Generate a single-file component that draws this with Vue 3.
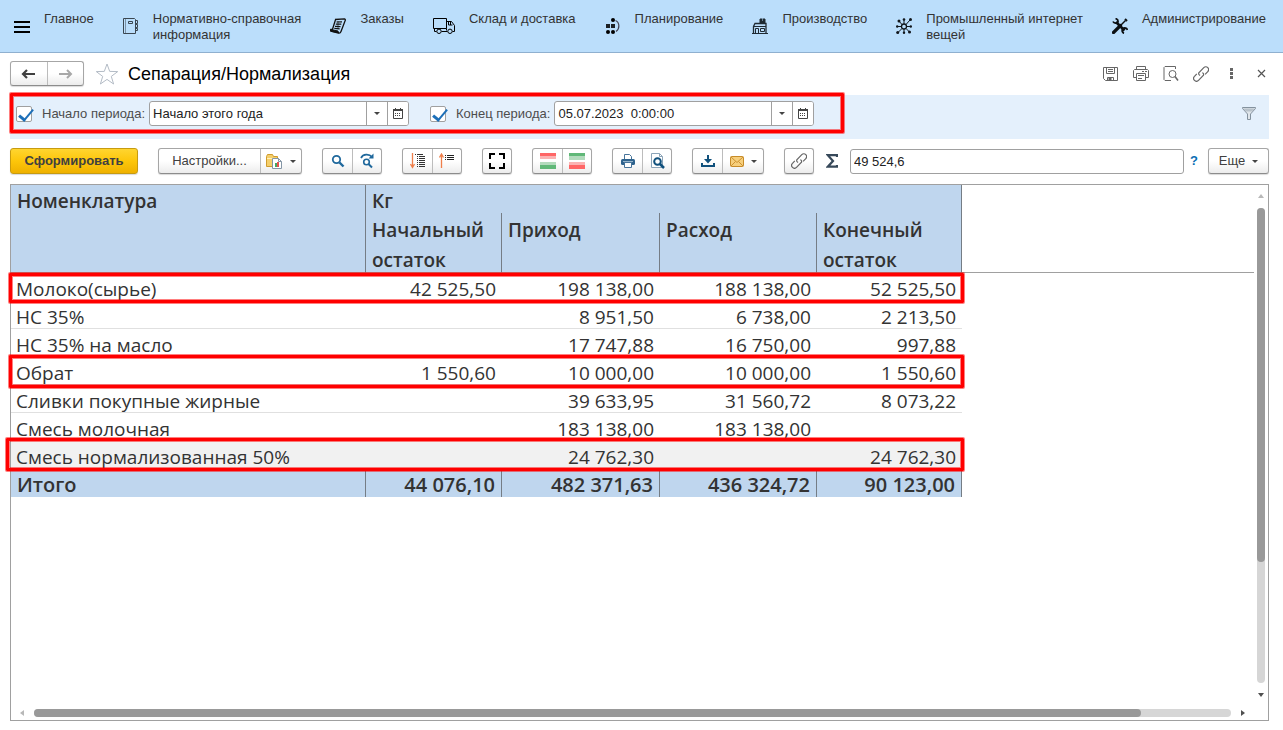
<script setup>
import { ref } from 'vue'

const startOn = ref(true)
const endOn = ref(true)
const startValue = ref('Начало этого года')
const endValue = ref('05.07.2023  0:00:00')
const sum = ref('49 524,6')

const sections = [
  { icon: 'menu', label: 'Главное' },
  { icon: 'book', label: 'Нормативно-справочная\nинформация' },
  { icon: 'orders', label: 'Заказы' },
  { icon: 'truck', label: 'Склад и доставка', wide: true },
  { icon: 'plan', label: 'Планирование' },
  { icon: 'factory', label: 'Производство' },
  { icon: 'iot', label: 'Промышленный интернет\nвещей' },
  { icon: 'tools', label: 'Администрирование' }
]

const rows = [
  { name: 'Молоко(сырье)', v: ['42 525,50', '198 138,00', '188 138,00', '52 525,50'], mark: 'mark-milk' },
  { name: 'НС 35%', v: ['', '8 951,50', '6 738,00', '2 213,50'] },
  { name: 'НС 35% на масло', v: ['', '17 747,88', '16 750,00', '997,88'] },
  { name: 'Обрат', v: ['1 550,60', '10 000,00', '10 000,00', '1 550,60'], mark: 'mark-skim' },
  { name: 'Сливки покупные жирные', v: ['', '39 633,95', '31 560,72', '8 073,22'] },
  { name: 'Смесь молочная', v: ['', '183 138,00', '183 138,00', ''] },
  { name: 'Смесь нормализованная 50%', v: ['', '24 762,30', '', '24 762,30'], mark: 'mark-mix', current: true }
]
const columns = ['Начальный остаток', 'Приход', 'Расход', 'Конечный остаток']
const totals = ['44 076,10', '482 371,63', '436 324,72', '90 123,00']
</script>

<template>
  <div class="app">
    <nav class="sections">
      <a v-for="s in sections" :key="s.label" href="#" class="section">
        <svg v-if="s.icon === 'menu'" class="sec-icon" viewBox="0 0 16 16"><path d="M0 4h16M0 9h16M0 14h16" stroke="#000" stroke-width="2" /></svg>
        <svg v-else-if="s.icon === 'book'" class="sec-icon" viewBox="0 0 16 16" fill="none" stroke="#3a4650">
          <path d="M.5.500h11l1 1v14H.5z" /><path d="M5.500 3.500h4v2h-4z" /><path d="M2.500 1v14" stroke-width=".5" /><path d="M13 2.500h1.500v3H13M13 6.500h1.500v3H13M13 10.500h1.500v2H13" />
        </svg>
        <svg v-else-if="s.icon === 'orders'" class="sec-icon" viewBox="0 0 16 16" fill="none" stroke="#111">
          <path d="M5 1.500 14.500.8c1 .3 1 1.400.5 2.200L11 13.500c-.5 1.300-1.500 1.800-2.500 1.500L1 13.200c-.8-.4-.7-1.400 0-1.900h1.500L5.500 1.800" stroke-width="1.300" />
          <path d="M1 11.500l7 1.500c0 1 .3 1.500 1 1.800L1 13.300z" fill="#111" /><path d="M6.500 4l5.500-.2M5.800 6.200l5.500-.1M5 8.400l5.500.2M4.300 10.300l5.400.6" stroke-width="1.200" /><path d="M8 3v8" stroke-width=".6" />
        </svg>
        <svg v-else-if="s.icon === 'truck'" class="sec-icon wide" viewBox="0 0 22 16" fill="none" stroke="#000">
          <path d="M3.500 13.500h-2v-3M.5 10.500V.5h13v10zM13.500 3.500h5l3 4v6h-2M8.500 13.500h6" /><path d="M15.500 3.500v3.500h4M17.500 4v3M13.500 10.500v2" /><circle cx="6" cy="13.300" r="2.200" /><circle cx="17" cy="13.300" r="2.200" />
        </svg>
        <svg v-else-if="s.icon === 'plan'" class="sec-icon" viewBox="0 0 16 16">
          <path d="M1 6h4v4H1zM6 6h4v4H6z" fill="#1c2024" /><circle cx="8" cy="2" r="2" /><circle cx="3" cy="14" r="2" /><circle cx="8" cy="14" r="2" /><path d="M10.500 2.500c4.400 2 4.400 8.500.5 11" fill="none" stroke="#445" stroke-width="1.200" />
        </svg>
        <svg v-else-if="s.icon === 'factory'" class="sec-icon" viewBox="0 0 16 16" fill="none" stroke="#1f2a33">
          <path d="M8 5V1h5v4z" fill="#1f2a33" /><path d="M1.500 15V8.500L3 5.500h11v9.500" stroke-width="1.300" /><path d="M0 15.500h16M3.500 15v-4.500h3V15M8.500 10.500h4v3h-4zM2 8.500h12" /><path d="M10.500 0v3" stroke="#bbdefb" stroke-width=".5" />
        </svg>
        <svg v-else-if="s.icon === 'iot'" class="sec-icon" viewBox="0 0 16 16" fill="none" stroke="#10161b">
          <circle cx="8" cy="8.500" r="2.500" stroke-width="1.300" /><path d="M8 1v5M8 11v4M1 8.500h4M11 8.500h4M2 2l4 4.500M14 2l-4 4.500M2 14.500l4-4M14 14.500l-4-4" />
          <g fill="#10161b" stroke="none"><circle cx="8" cy="1.500" r="1.300" /><circle cx="8" cy="14.800" r="1.200" /><circle cx="1.200" cy="8.500" r="1.200" /><circle cx="14.800" cy="8.500" r="1.200" /><circle cx="3" cy="3" r="1.500" /><circle cx="14.500" cy="1.500" r="1.500" /><circle cx="1.700" cy="14.500" r="1.500" /><circle cx="13.500" cy="14" r="1.500" /></g>
        </svg>
        <svg v-else class="sec-icon" viewBox="0 0 16 16" fill="none" stroke="#0c1013">
          <path d="M1.500 14.500l7-7" stroke-width="3.200" stroke-linecap="round" /><path d="M8 8l5.500-5.500" stroke-width="1.500" /><path d="M13 1l2 2" stroke-width="2" /><path d="M4 4l8.500 8.500" stroke-width="2.600" />
          <path d="M1 3.500a2.800 2.800 0 0 0 5 .2A2.800 2.800 0 0 0 3.500.7M12 15.300a2.800 2.800 0 0 1-1-4.600 2.800 2.800 0 0 1 4.500 1.300" stroke-width="1.800" />
        </svg>
        <span>{{ s.label }}</span>
      </a>
    </nav>

    <header class="title-row">
      <div class="group history">
        <button aria-label="Назад"><svg width="15" height="10" viewBox="0 0 15 10"><path d="M14 5H3M6 1 2 5l4 4" fill="none" stroke="#404040" stroke-width="2.200" /></svg></button>
        <button aria-label="Вперед"><svg width="15" height="10" viewBox="0 0 15 10"><path d="M1 5h11M9 1l4 4-4 4" fill="none" stroke="#a8a8a8" stroke-width="2" /></svg></button>
      </div>
      <button class="plain" aria-label="Избранное"><svg width="24" height="22" viewBox="0 0 24 22"><path d="M12 1l2.700 7.400 8 .2-6.400 4.800 2.300 7.600-6.600-4.600L5.400 21l2.300-7.600L1.300 8.600l8-.2z" fill="none" stroke="#b4bcc6" /></svg></button>
      <h1>Сепарация/Нормализация</h1>
      <div class="window-tools">
        <button class="plain" aria-label="Сохранить"><svg width="16" height="16" viewBox="0 0 16 16" fill="none" stroke="#666"><path d="M.5 1.500h14v13h-12l-2-2z" /><path d="M3.500 1.500v6h8v-6M5 3.500h5M5 5.500h5M4.500 14.500v-3h6v3" /><path d="M6 12h2v2H6z" fill="#666" /></svg></button>
        <button class="plain" aria-label="Печать"><svg width="16" height="16" viewBox="0 0 16 16" fill="none" stroke="#666"><path d="M3.500 3.500v-3h9v3M3.500 11.500h-3v-7l1-1h13l1 1v7h-3M9 5.500h2M12 5.500h2" /><path d="M3.500 7.500h9v7h-9zM5 9.500h6M5 12.500h4" /></svg></button>
        <button class="plain" aria-label="Просмотр"><svg width="16" height="16" viewBox="0 0 16 16" fill="none" stroke="#666"><path d="M8 14.500H2l-1-1V1.500l1-1h10.500V3" /><circle cx="9.500" cy="8" r="3.500" /><path d="M12 10.500l3 4" stroke-width="1.500" /></svg></button>
        <button class="plain" aria-label="Ссылка"><svg width="16" height="16" viewBox="0 0 16 16" fill="none" stroke="#666" stroke-width="1.200"><path d="M7 9.500L5.800 8.300a2.400 2.400 0 0 1 0-1.500l5-5.200a2.800 2.800 0 0 1 4 4l-2.700 2.800" /><path d="M9.500 6.500l1 1.300a2.400 2.400 0 0 1 0 1.400l-5 5.200a2.800 2.800 0 0 1-4-4l2.300-2.500" /></svg></button>
        <button class="plain" aria-label="Действия"><svg width="16" height="16" viewBox="0 0 16 16" fill="#666"><path d="M7 2h3v3H7zM7 6h3v3H7zM7 10h3v3H7z" /></svg></button>
        <button class="plain" aria-label="Закрыть"><svg width="16" height="16" viewBox="0 0 16 16"><path d="M5 4l7 7M12 4l-7 7" stroke="#555" stroke-width="1.200" /></svg></button>
      </div>
    </header>

    <section class="filters">
      <div class="filter-mark"></div>
      <div class="filter">
        <input id="use-start" v-model="startOn" type="checkbox" class="tick" aria-label="Использовать начало периода">
        <label for="start">Начало периода:</label>
        <div class="combo">
          <input id="start" v-model="startValue" type="text">
          <button aria-label="Выбрать начало"><i class="caret"></i></button>
          <button aria-label="Календарь начала"><svg width="10" height="11" viewBox="0 0 10 11"><path d="M.5 1.500h9v9h-9z" fill="#fff" stroke="#444" /><path d="M0 1h10v2H0z" fill="#444" /><path d="M2.500 0v2M7.500 0v2" stroke="#444" /><path d="M2 5.500h6M2 7.500h6" stroke="#444" stroke-dasharray="1 1" /></svg></button>
        </div>
      </div>
      <div class="filter">
        <input id="use-end" v-model="endOn" type="checkbox" class="tick" aria-label="Использовать конец периода">
        <label for="end">Конец периода:</label>
        <div class="combo">
          <input id="end" v-model="endValue" type="text">
          <button aria-label="Выбрать конец"><i class="caret"></i></button>
          <button aria-label="Календарь конца"><svg width="10" height="11" viewBox="0 0 10 11"><path d="M.5 1.500h9v9h-9z" fill="#fff" stroke="#444" /><path d="M0 1h10v2H0z" fill="#444" /><path d="M2.500 0v2M7.500 0v2" stroke="#444" /><path d="M2 5.500h6M2 7.500h6" stroke="#444" stroke-dasharray="1 1" /></svg></button>
        </div>
      </div>
      <button class="plain funnel" aria-label="Отбор"><svg width="14" height="13" viewBox="0 0 14 13"><path d="M.5.500h13v1L8.500 7v5.500h-3V7L.5 1.500z" fill="#dfe5ea" stroke="#84929e" /><path d="M1 1.500h12l-3 3H4z" fill="#b9c3cb" /></svg></button>
    </section>

    <div class="toolbar">
      <button class="primary">Сформировать</button>
      <div class="group">
        <button class="settings">Настройки...</button>
        <button class="drop" aria-label="Варианты отчета"><svg width="17" height="16" viewBox="0 0 17 16"><path d="M.5 3.500l1-2h5l1 2h4v10H.5z" fill="#f5cf6b" stroke="#d09c2e" /><path d="M1 5.500h10" stroke="#fff1bb" /><path d="M6.500 5.500h6l3 3v7h-9z" fill="#fff" stroke="#8496a6" /><path d="M12.500 5.500v3h3" fill="none" stroke="#8496a6" /><path d="M9 10h2v4H9z" fill="#45a862" /><path d="M11 9h2v5h-2z" fill="#e65050" /></svg><i class="caret"></i></button>
      </div>
      <div class="group">
        <button aria-label="Найти"><svg width="14" height="14" viewBox="0 0 14 14" fill="none" stroke="#1f689c"><circle cx="5.500" cy="5.500" r="3.700" stroke-width="1.800" /><path d="M8.500 8.500l4 4" stroke-width="2.400" /></svg></button>
        <button aria-label="Найти далее"><svg width="16" height="16" viewBox="0 0 16 16" fill="none" stroke="#1f689c"><path d="M2 5c2-4 8-4.500 11-1" stroke-width="1.700" /><path d="M14.500.5v5h-5z" fill="#1f689c" stroke="none" /><circle cx="7.500" cy="9" r="2.800" stroke-width="1.600" /><path d="M9.500 11l3.500 3.500" stroke-width="2" /></svg></button>
      </div>
      <div class="group">
        <button aria-label="Развернуть"><svg width="16" height="16" viewBox="0 0 16 16" fill="none"><path d="M2.500 0v14M.5 11l2 3.500 2-3.500" stroke="#ef7f4b" stroke-width="1.300" /><path d="M5 1.500h1M7 1.500h6M7 3.500h1M9 3.500h6M7 5.500h1M9 5.500h6M7 7.500h1M9 7.500h6M7 9.500h1M9 9.500h6M7 11.500h1M9 11.500h6M7 13.500h1M9 13.500h6" stroke="#333" /></svg></button>
        <button aria-label="Свернуть"><svg width="16" height="16" viewBox="0 0 16 16" fill="none"><path d="M2.500 15V1M.5 4.500l2-3.500 2 3.500" stroke="#ef7f4b" stroke-width="1.300" /><path d="M6 2.500h1M8 2.500h7M6 4.500h1M8 4.500h7M6 6.500h1M8 6.500h7" stroke="#222" /></svg></button>
      </div>
      <div class="group">
        <button class="single" aria-label="Во весь экран"><svg width="16" height="16" viewBox="0 0 16 16"><path d="M1 6V1h5M10 1h5v5M15 10v5h-5M6 15H1v-5" fill="none" stroke="#000" stroke-width="2" /></svg></button>
      </div>
      <div class="group">
        <button aria-label="Верхние итоги"><svg width="16" height="16" viewBox="0 0 16 16"><path d="M0 0h16v3H0z" fill="#f66" /><path d="M0 3h16v3H0z" fill="#fbb3b3" /><path d="M0 9h16v3H0z" fill="#b3dbbd" /><path d="M0 12h16v4H0z" fill="#60b878" /></svg></button>
        <button aria-label="Нижние итоги"><svg width="16" height="16" viewBox="0 0 16 16"><path d="M0 0h16v3H0z" fill="#60b878" /><path d="M0 3h16v4H0z" fill="#b3dbbd" /><path d="M0 9h16v3H0z" fill="#fbb3b3" /><path d="M0 12h16v4H0z" fill="#f66" /></svg></button>
      </div>
      <div class="group">
        <button aria-label="Печать отчета"><svg width="14" height="14" viewBox="0 0 14 14"><path d="M3.500 5V.5h5l2 2V5" fill="#fff" stroke="#47749a" /><rect y="5" width="14" height="6" rx="1.500" fill="#2f638e" /><path d="M2 7.500h10" stroke="#97b5cb" /><path d="M3.500 8.500h7v5h-7z" fill="#fff" stroke="#47749a" /></svg></button>
        <button aria-label="Предварительный просмотр"><svg width="16" height="16" viewBox="0 0 16 16"><path d="M2.500.500h8l3 3v11h-11z" fill="#fff" stroke="#8ca4b8" /><path d="M10.500.500v3h3" fill="none" stroke="#8ca4b8" /><circle cx="8.500" cy="8.500" r="3.300" fill="#fff" stroke="#10507c" stroke-width="2" /><path d="M11 11l4 4" stroke="#10507c" stroke-width="2.500" /></svg></button>
      </div>
      <div class="group">
        <button aria-label="Сохранить отчет"><svg width="14" height="14" viewBox="0 0 14 14" fill="none" stroke="#10507c" stroke-width="2"><path d="M7 1v5" /><path d="M3 5h8L7 9.500z" fill="#10507c" stroke="none" /><path d="M1 9v3h12V9" /></svg></button>
        <button class="drop mail" aria-label="Отправить"><svg width="14" height="11" viewBox="0 0 14 11"><rect x=".5" y=".5" width="13" height="10" rx="1" fill="#f7cf7c" stroke="#c78b28" /><path d="M1 1l6 5.500L13 1M1 10l4.500-4.500M13 10L8.500 5.500" fill="none" stroke="#c78b28" stroke-width=".9" /></svg><i class="caret"></i></button>
      </div>
      <div class="group">
        <button class="single" aria-label="Получить ссылку"><svg width="16" height="16" viewBox="0 0 16 16" fill="none" stroke="#666" stroke-width="1.200"><path d="M7 9.500L5.800 8.300a2.400 2.400 0 0 1 0-1.500l5-5.200a2.800 2.800 0 0 1 4 4l-2.700 2.800" /><path d="M9.500 6.500l1 1.300a2.400 2.400 0 0 1 0 1.400l-5 5.200a2.800 2.800 0 0 1-4-4l2.300-2.500" /></svg></button>
      </div>
      <svg class="sigma" width="12" height="14" viewBox="0 0 12 14"><path d="M11 3V1.200H1.800L7 7l-5.200 5.700H11V11" fill="none" stroke="#37495a" stroke-width="2.200" /></svg>
      <input v-model="sum" class="sum" type="text" aria-label="Сумма">
      <a href="#" class="help">?</a>
      <button class="more">Еще<i class="caret"></i></button>
    </div>

    <main class="viewer">
      <div class="sheet">
        <table>
          <colgroup><col class="c-name"><col class="c-open"><col class="c-in"><col class="c-out"><col class="c-close"></colgroup>
          <thead>
            <tr class="h1"><th rowspan="2">Номенклатура</th><th colspan="4">Кг</th></tr>
            <tr class="h2"><th v-for="c in columns" :key="c"><div class="caption">{{ c }}</div></th></tr>
          </thead>
          <tbody>
            <tr v-for="r in rows" :key="r.name" :class="{ current: r.current }">
              <td>{{ r.name }}<i v-if="r.mark" class="mark" :class="r.mark"></i></td>
              <td v-for="(x, i) in r.v" :key="i" class="num">{{ x }}</td>
            </tr>
          </tbody>
          <tfoot>
            <tr><th>Итого</th><th v-for="t in totals" :key="t" class="num">{{ t }}</th></tr>
          </tfoot>
        </table>
        <div class="freeze"></div>
      </div>
      <div class="vbar"><i class="arrow up"></i><div class="track"><div class="thumb"></div></div><i class="arrow down"></i></div>
      <div class="hbar"><i class="arrow left"></i><div class="track"><div class="thumb"></div></div><i class="arrow right"></i></div>
    </main>
  </div>
</template>

<style>
body {
  background: #fff;
}
</style>

<style scoped>
.app {
  box-sizing: border-box;
  display: flex;
  flex-direction: column;
  min-height: 100vh;
  padding-bottom: 9px;
  font: 13px/16px "Liberation Sans", Arial, sans-serif;
  color: #404040;
}
.app * { box-sizing: border-box; }
svg { display: block; flex: none; }
button, input { font: inherit; color: inherit; margin: 0; }
button { padding: 0; cursor: pointer; }

.sections {
  display: flex;
  justify-content: space-between;
  height: 53px;
  padding: 11px 17px 0 14px;
  background: #bbdefb;
  border-bottom: 1px solid #8fb0cf;
}
.section {
  display: flex;
  gap: 14px;
  color: #333;
  text-decoration: none;
  white-space: pre;
}
.sec-icon { width: 16px; height: 16px; margin-top: 7px; }
.sec-icon.wide { width: 22px; }

.title-row {
  display: flex;
  align-items: center;
  height: 42px;
  padding: 0 14px 1px 10px;
}
.history { width: 74px; margin-right: 11px; }
.history button { flex: 1; }
.plain {
  display: flex;
  align-items: center;
  justify-content: center;
  background: none;
  border: 0;
}
h1 {
  margin: 0 auto 0 9px;
  font-size: 18px;
  line-height: 24px;
  font-weight: 400;
  color: #000;
}
.window-tools { display: flex; gap: 14px; }

.filters {
  position: relative;
  display: flex;
  align-items: center;
  height: 44px;
  margin: 0 14px 0 10px;
  padding: 0 13px 7px 6px;
  background: #e4f0fc;
  gap: 21px;
}
.filter { display: flex; align-items: center; }
.filter label { margin: 0 4px 0 10px; color: #4d4d4d; white-space: pre; }
.tick {
  appearance: none;
  position: relative;
  width: 16px;
  height: 16px;
  background: #fff;
  border: 1px solid #a0a0a0;
  border-radius: 2px;
}
.tick:checked::after {
  content: "";
  position: absolute;
  left: 5px;
  top: -1px;
  width: 6px;
  height: 12px;
  border: solid #1d6fb8;
  border-width: 0 2px 3px 0;
  transform: rotate(40deg);
}
.combo {
  display: flex;
  width: 260px;
  height: 25px;
  background: #fff;
  border: 1px solid #a0a0a0;
  border-radius: 3px;
  overflow: hidden;
}
.combo input {
  flex: 1;
  min-width: 0;
  padding: 0 3px;
  background: none;
  border: 0;
  color: #222;
}
.combo button {
  display: flex;
  align-items: center;
  justify-content: center;
  width: 21px;
  background: #fff;
  border: 0;
  border-left: 1px solid #a0a0a0;
}
.caret {
  flex: none;
  border: 3px solid transparent;
  border-top-color: #444;
  border-bottom: 0;
}
.funnel { margin-left: auto; }
.filter-mark {
  position: absolute;
  left: 0;
  top: -2px;
  width: 834px;
  height: 40px;
  pointer-events: none;
}
.filter-mark, .mark {
  border: 3px solid #f00;
  border-radius: 1px;
  box-shadow: 0 0 0 1px #ff000080, inset 0 0 0 1px #ff000080;
}

.toolbar {
  display: flex;
  align-items: center;
  gap: 20px;
  height: 45px;
  padding: 0 14px 1px 10px;
}
.group, .primary, .more {
  display: flex;
  height: 26px;
  border: 1px solid #a6a6a6;
  border-bottom-color: #8c8c8c;
  border-radius: 3px;
  background: linear-gradient(#fff, #fff 50%, #ececec);
  box-shadow: 0 1px 1px #00000026;
}
.group button {
  display: flex;
  align-items: center;
  justify-content: center;
  width: 29px;
  background: none;
  border: 0;
}
.group button + button { border-left: 1px solid #bcbcbc; }
.group.history button { width: auto; }
.history { height: 25px; }
.group .single { width: 28px; }
.group .settings { width: 101px; }
.group .drop { width: 41px; gap: 7px; }
.primary {
  align-items: center;
  justify-content: center;
  width: 128px;
  font-weight: 700;
  background: linear-gradient(#ffd530, #fdc60a 50%, #efb100);
  border-color: #c79b10;
}
.sigma { margin: 0 -8px; }
.sum {
  flex: 1;
  min-width: 0;
  height: 25px;
  padding: 0 3px;
  color: #222;
  background: #fff;
  border: 1px solid #a0a0a0;
  border-radius: 3px;
}
.help {
  margin: 0 -10px 0 -14px;
  color: #0a6eb4;
  font-weight: 700;
  text-decoration: none;
}
.more {
  align-items: center;
  justify-content: center;
  gap: 7px;
  width: 61px;
}

.viewer {
  flex: 1;
  display: grid;
  grid-template: 1fr 15px / 1fr 14px;
  margin: 0 14px 0 10px;
  border: 1px solid #a0a0a0;
}
.sheet {
  display: flex;
  align-items: flex-start;
  font: 19px/22px "Open Sans", "Noto Sans", sans-serif;
  color: #333;
}
.freeze { flex: 1; height: 88px; border-bottom: 1px solid #a0a0a0; }
table {
  width: 951px;
  table-layout: fixed;
  border-spacing: 0;
}
.c-name { width: 355px; }
.c-open { width: 136px; }
.c-in { width: 158px; }
.c-out { width: 157px; }
.c-close { width: 145px; }
th, td { text-align: left; vertical-align: top; }
th {
  padding: 0 6px;
  font-weight: 600;
  background: #bfd6ee;
  border-right: 1px solid #757d85;
}
.h1 { height: 28px; }
.h1 th { padding-top: 4px; line-height: 24px; }
.h1 th:first-child, .h2 th { border-bottom: 1px solid #a0a0a0; }
.h2 { height: 60px; }
.h2 th { padding-top: 2px; line-height: 30px; }
.caption { height: 57px; }
tbody tr { position: relative; }
td {
  height: 28px;
  padding: 5px 6px 0 5px;
  border-bottom: 1px solid #e0e0e0;
}
.current td { background: #f1f1f1; }
tfoot th {
  height: 28px;
  padding-top: 3px;
  font-size: 20px;
  line-height: 25px;
}
.num { text-align: right; white-space: nowrap; }
.mark { position: absolute; left: -2px; right: -2px; pointer-events: none; }
.mark-milk { top: 0; bottom: -2px; }
.mark-skim { top: -2px; bottom: -3px; }
.mark-mix { top: -3px; bottom: -2px; left: -5px; }

.vbar, .hbar { display: flex; align-items: center; }
.vbar {
  flex-direction: column;
  gap: 10px;
  padding: 9px 0 8px;
}
.track { flex: 1; background: #d6d6d6; border-radius: 4px; }
.thumb { background: #999; border-radius: 4px; }
.vbar .track { width: 8px; }
.vbar .thumb { height: 74.5%; }
.hbar {
  gap: 10px;
  padding: 0 9px;
}
.hbar .track { height: 8px; }
.hbar .thumb { height: 8px; width: 92.5%; }
.arrow { border: 3px solid transparent; }
.up { border-bottom: 4px solid #b8b8b8; border-top: 0; }
.down { border-top: 4px solid #505050; border-bottom: 0; }
.left { border-right: 4px solid #b8b8b8; border-left: 0; }
.right { border-left: 4px solid #505050; border-right: 0; }
</style>
